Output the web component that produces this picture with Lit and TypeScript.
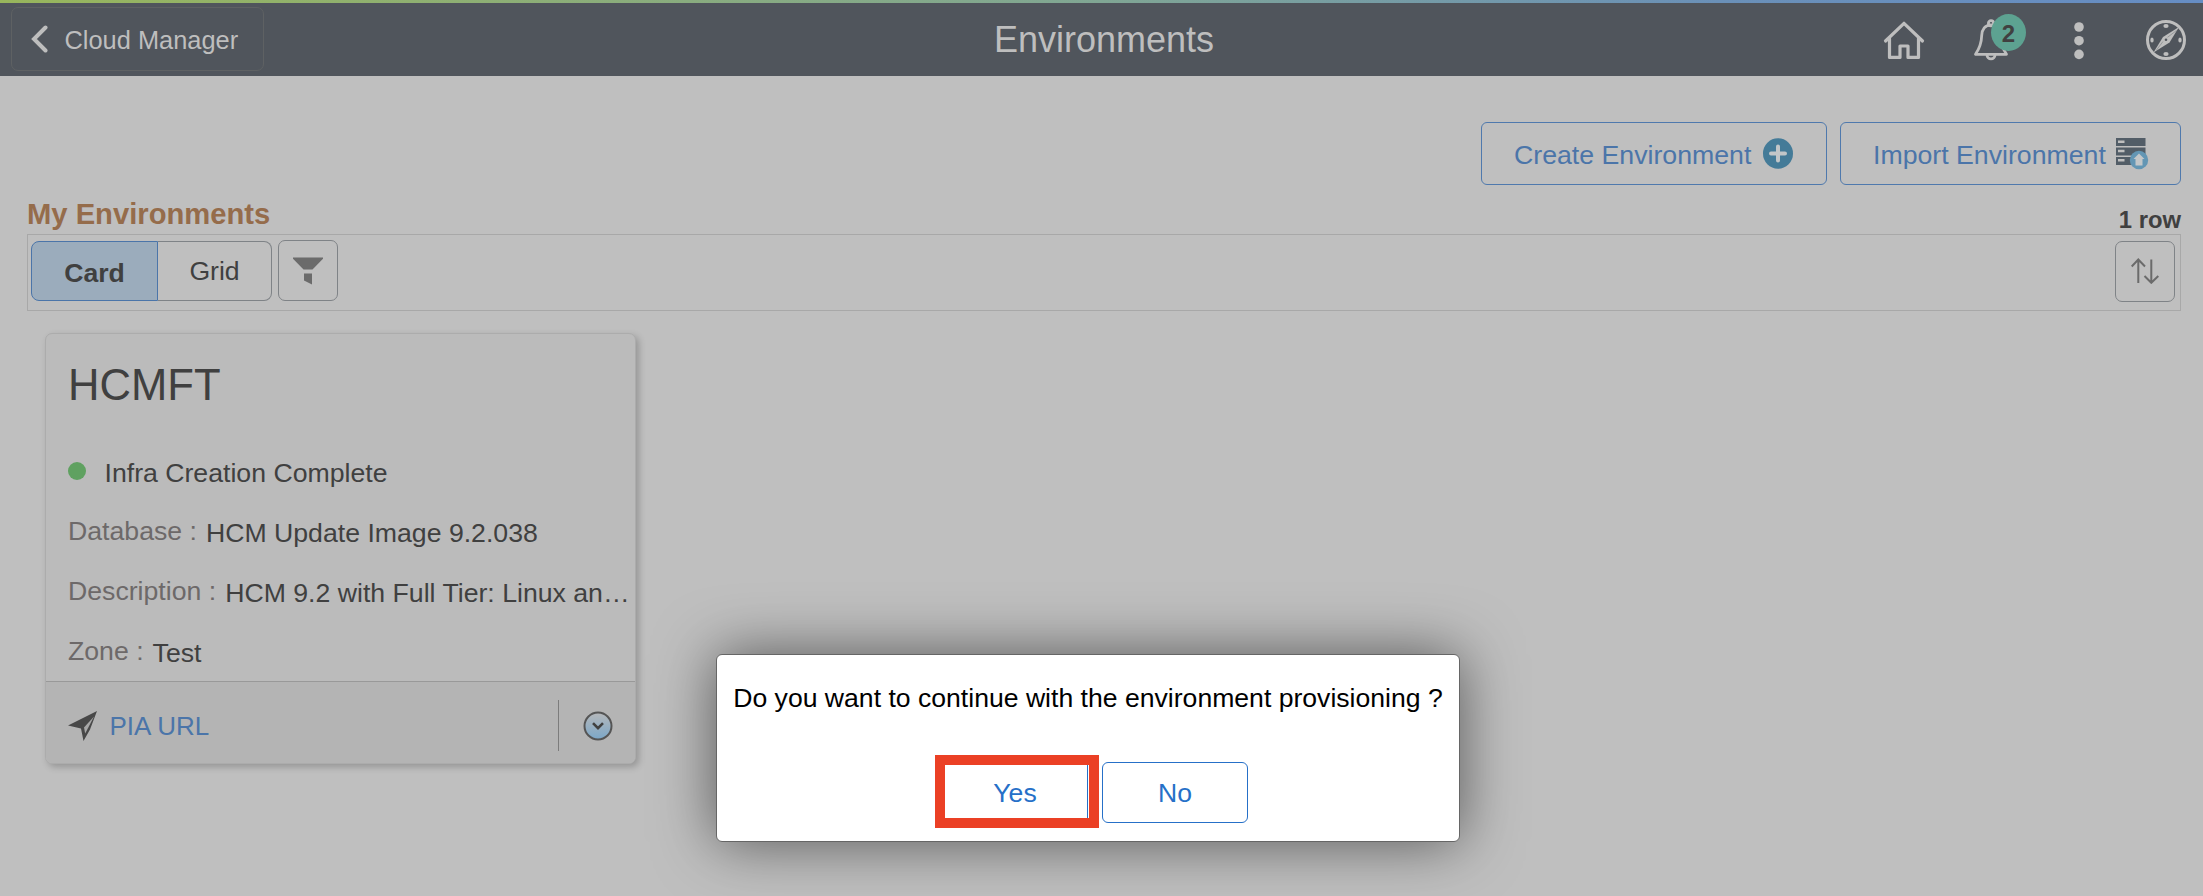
import { LitElement, html, css } from "lit";
import { customElement, property } from "lit/decorators.js";

const icons = {
  back: html`<svg width="17" height="28" viewBox="0 0 17 28"><path d="M14.500 2.500 3 14l11.500 11.500" fill="none" stroke="#bebebe" stroke-width="4" stroke-linecap="round"/></svg>`,
  home: html`<svg width="42" height="42" viewBox="0 0 42 42" fill="none" stroke="#bebebe" stroke-width="3.200" stroke-linejoin="round" stroke-linecap="round"><path d="M2.500 22 21 4.300 39.500 22M6.500 19.500v18.900h10.500V27h8v11.400h10.500V19.500"/></svg>`,
  bell: html`<svg width="36" height="42" viewBox="0 0 36 42" fill="none" stroke="#bebebe" stroke-width="2.800" stroke-linejoin="round"><circle cx="18" cy="4.300" r="2.600"/><path d="M18 6c-6 0-9 4.500-9.300 10.500C8.500 24 6.500 29.500 2.500 35.300h31c-4-5.800-6-11.300-6.200-18.800C27 10.500 24 6 18 6z"/><path d="M14 36a4 3.900 0 0 0 8 0"/></svg>`,
  dots: html`<svg width="10" height="38" viewBox="0 0 10 38" fill="#bebebe"><circle cx="5" cy="5" r="4.800"/><circle cx="5" cy="18.700" r="4.800"/><circle cx="5" cy="32.400" r="4.800"/></svg>`,
  compass: html`<svg width="42" height="42" viewBox="0 0 42 42"><circle cx="21" cy="21" r="18.500" fill="none" stroke="#bebebe" stroke-width="3"/><path d="M34 8 24.500 23.500 8.500 33.500 18 18z" fill="#bebebe"/><path d="M31.500 11.500 22.500 18.300M11.500 31 18 22.500" stroke="#50555c" stroke-width=".6" opacity=".6"/><circle cx="21" cy="20.800" r="1.300" fill="#50555c"/><ellipse cx="21" cy="7" rx="2.600" ry="1.900" fill="#bebebe"/><ellipse cx="21" cy="35" rx="2.600" ry="1.900" fill="#bebebe"/><ellipse cx="7" cy="21" rx="1.700" ry="2.500" fill="#bebebe"/><ellipse cx="35" cy="21" rx="1.700" ry="2.500" fill="#bebebe"/></svg>`,
  plus: html`<svg width="30" height="31" viewBox="0 0 30 31"><ellipse cx="15" cy="15.500" rx="15" ry="15.300" fill="#447b98"/><path d="M15 8.500v14M8 15.500h14" stroke="#c2c6c8" stroke-width="4" stroke-linecap="round"/></svg>`,
  server: html`<svg width="33" height="33" viewBox="0 0 33 33"><g fill="#525d67"><path d="M0 1h29.500v8H0zM0 10.500h29.500v8H0zM0 20h26v8H0z"/></g><g fill="#bfbfbf"><path d="M2 3.500h6.500v2.500H2zM2 12.700h6.500v2.600H2zM2 22h6.500v2.500H2z"/></g><circle cx="23" cy="23" r="9.200" fill="#6396b4"/><path d="M23 16.500 28.500 22h-2v6.500h-7v-6.500h-2z" fill="#c3c7c9"/></svg>`,
  filter: html`<svg width="30" height="28" viewBox="0 0 30 28" fill="#6b6b6b"><path d="M0 .5h30v1.200L19.500 12.500h-9L0 1.700zM11 16.500h8v11l-8-4z"/></svg>`,
  sort: html`<svg width="28" height="26" viewBox="0 0 28 26" fill="none" stroke="#6b6b6b" stroke-width="2"><path d="M7.300 25V1.500M.7 8.500l6.600-7 6.700 7M20.300 1.500V25M13.500 18l6.800 6.800L27.300 18"/></svg>`,
  send: html`<svg width="29" height="30" viewBox="0 0 29 30"><path d="M29 0 0 14.500l13 3L15.500 30 22 18.500z" fill="#484848"/><path d="M26 5.500 17.200 22.500 16 16.500z" fill="#a8a8a8"/></svg>`,
  more: html`<svg width="30" height="30" viewBox="0 0 30 30"><defs><linearGradient id="g" x1="0" y1="0" x2="0" y2="1"><stop offset="0" stop-color="#b6b8ba"/><stop offset="1" stop-color="#7ba7c8"/></linearGradient></defs><circle cx="15" cy="15" r="13.500" fill="url(#g)" stroke="#555" stroke-width="2"/><path d="M10 12.200l5 5 5-5" fill="none" stroke="#404040" stroke-width="2.600"/></svg>`,
};

@customElement("env-header")
class EnvHeader extends LitElement {
  static styles = css`
    :host { display: block; }
    .strip { height: 3px; background: linear-gradient(90deg, #98b65c, #80a694 50%, #6a90b8 78%, #668dc4); }
    .bar { height: 73px; background: #50555c; display: grid; grid-template-columns: 1fr auto 1fr; color: #bebebe; }
    .back { margin: 4px 0 0 11px; width: 253px; height: 64px; box-sizing: border-box; border: 1px solid #5e6163; border-radius: 7px;
      display: flex; align-items: center; padding-left: 19px; gap: 16.5px; font-size: 25.4px; white-space: nowrap; }
    .back svg { flex: none; }
    .back span { padding-top: 2px; }
    .title { font-size: 36px; line-height: 73px; padding-left: 5px; }
    .tools { display: flex; justify-content: flex-end; padding: 16px 16px 0 0; align-items: flex-start; }
    .tools svg { display: block; }
    .bell { position: relative; margin-left: 48px; }
    .badge { position: absolute; left: 18px; top: -5px; width: 35px; height: 37px; border-radius: 50%; background: #5da291; color: #404040;
      font-weight: bold; font-size: 24px; line-height: 40px; text-align: center; }
    .dots { margin: 2.5px 61px 0 65px; }
  `;
  render() {
    return html`<div class="strip"></div>
      <div class="bar">
        <div class="back">${icons.back}<span>Cloud Manager</span></div>
        <div class="title">Environments</div>
        <div class="tools">
          <div>${icons.home}</div>
          <div class="bell">${icons.bell}<div class="badge">2</div></div>
          <div class="dots">${icons.dots}</div>
          <div>${icons.compass}</div>
        </div>
      </div>`;
  }
}

@customElement("env-card")
class EnvCard extends LitElement {
  @property({ attribute: false }) env: any;
  static styles = css`
    :host { display: block; width: 591px; height: 431px; box-sizing: border-box; border: 1px solid #acacac; border-radius: 7px;
      background: #bbbbbb; box-shadow: 3px 3px 7px rgba(0,0,0,.22); color: #404040; overflow: hidden; font-size: 26.67px; }
    .body { height: 347px; padding: 0 0 0 22px; box-sizing: border-box; }
    .name { font-size: 43.6px; line-height: 50px; padding-top: 26px; height: 84px; }
    .row { display: flex; height: 60px; line-height: 40px; white-space: nowrap; }
    .status { height: 67px; padding-top: 9px; box-sizing: border-box; align-items: flex-start; }
    .dot { width: 18px; height: 18px; border-radius: 50%; background: #5fa160; margin: 9px 18.5px 0 0; }
    .key { color: #6d6969; margin-right: 9px; flex: none; }
    .val { padding-top: 2px; }
    .foot { height: 82px; border-top: 1px solid #999; background: #b4b4b4; display: flex; align-items: center; padding: 0 22.5px 0 22px;
      box-sizing: border-box; }
    .foot svg { display: block; flex: none; margin-top: 6px; }
    .link { color: #4b75a9; font-size: 26px; margin: 7px auto 0 12.5px; }
    .rule { width: 1px; height: 51px; background: #7c7c7c; margin: 6px 24px 0 0; }
  `;
  render() {
    return html`<div class="body">
        <div class="name">${this.env.name}</div>
        <div class="row status"><span class="dot"></span><span>${this.env.status}</span></div>
        ${this.env.fields.map((f: string[]) => html`<div class="row"><span class="key">${f[0]} :</span><span class="val">${f[1]}</span></div>`)}
      </div>
      <div class="foot">${icons.send}<span class="link">PIA URL</span><span class="rule"></span>${icons.more}</div>`;
  }
}

@customElement("app-root")
class AppRoot extends LitElement {
  static styles = css`
    :host { display: block; position: relative; width: 100%; height: 896px; overflow: hidden; background: #bfbfbf;
      font-family: "Liberation Sans", Arial, sans-serif; color: #404040; }
    .main { padding: 46px 22px 0 27px; }
    .actions { display: flex; justify-content: flex-end; gap: 13px; }
    .btn { box-sizing: border-box; height: 63px; border: 1px solid #4f79ad; border-radius: 6px; color: #4b75a9; font-size: 26.7px;
      display: flex; align-items: center; gap: 12px; white-space: nowrap; }
    .btn span { padding-top: 3px; }
    .create { width: 346px; padding-left: 32px; }
    .import { width: 341px; padding-left: 32px; gap: 10px; }
    .import svg { margin-top: -1px; }
    .head { display: flex; justify-content: space-between; height: 49px; }
    .h { font-weight: bold; font-size: 29.2px; line-height: 34px; padding-top: 12px; color: #956c4b; }
    .count { font-weight: bold; font-size: 23.8px; line-height: 30px; padding-top: 20px; }
    .bar { box-sizing: border-box; height: 77px; border: 1px solid #a8a8a8; display: flex; padding: 5px 5px 0 3px; font-size: 26.6px; }
    .seg { box-sizing: border-box; height: 60px; border: 1px solid #7f8387; display: flex; align-items: center; justify-content: center; margin-top: 1px; }
    .on { width: 127px; background: #9bacbc; border-color: #4b75a9; border-radius: 8px 0 0 8px; font-weight: bold; padding-top: 4px; }
    .off { width: 114px; border-left: 0; border-radius: 0 8px 8px 0; }
    .sq { box-sizing: border-box; width: 60px; height: 61px; border: 1px solid #7f8387; border-radius: 7px; display: flex; align-items: center; justify-content: center; }
    .filter { margin-left: 6px; }
    .sort { margin: 1px 0 0 auto; }
    .sort svg { margin-top: -2px; }
    .cards { padding: 22px 0 0 18px; }
    .modal { position: absolute; left: 716px; top: 654px; width: 744px; height: 188px; box-sizing: border-box; background: #fff;
      border: 1px solid #666; border-radius: 6px; box-shadow: 0 0 60px rgba(0,0,0,.55); color: #000; font-size: 26.6px; text-align: center; }
    .msg { line-height: 36px; padding-top: 25px; white-space: nowrap; }
    .choices { display: flex; gap: 3px; padding: 39px 0 0 218px; }
    .yes { box-sizing: border-box; width: 164px; height: 73px; border: 10px solid #eb4025; display: flex; }
    .yes span { flex: 1; margin-right: 1px; padding-right: 6px; padding-left: 4px; border-right: 1px solid #2670c8; line-height: 56px; height: 53px; color: #2670c8; }
    .no { box-sizing: border-box; width: 146px; height: 61px; margin-top: 7px; border: 1px solid #2670c8; border-radius: 6px; color: #2670c8; line-height: 60px; }
  `;
  render() {
    const env = {
      name: "HCMFT",
      status: "Infra Creation Complete",
      fields: [
        ["Database", "HCM Update Image 9.2.038"],
        ["Description", "HCM 9.2 with Full Tier: Linux an…"],
        ["Zone", "Test"],
      ],
    };
    return html`<env-header></env-header>
      <div class="main">
        <div class="actions">
          <div class="btn create"><span>Create Environment</span>${icons.plus}</div>
          <div class="btn import"><span>Import Environment</span>${icons.server}</div>
        </div>
        <div class="head"><span class="h">My Environments</span><span class="count">1 row</span></div>
        <div class="bar">
          <div class="seg on">Card</div><div class="seg off">Grid</div>
          <div class="sq filter">${icons.filter}</div>
          <div class="sq sort">${icons.sort}</div>
        </div>
        <div class="cards"><env-card .env=${env}></env-card></div>
      </div>
      <div class="modal">
        <div class="msg">Do you want to continue with the environment provisioning ?</div>
        <div class="choices"><div class="yes"><span>Yes</span></div><div class="no">No</div></div>
      </div>`;
  }
}
